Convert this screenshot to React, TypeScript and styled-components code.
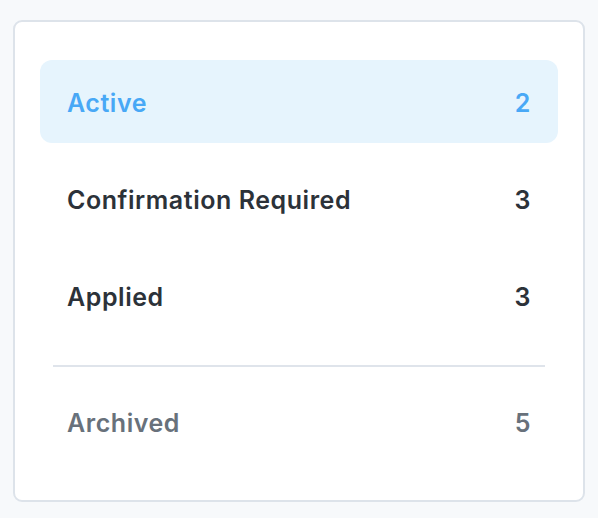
import React from 'react';
import styled, { createGlobalStyle } from 'styled-components';

const GlobalStyle = createGlobalStyle`
  html, body {
    margin: 0;
    padding: 0;
    background: #f7f9fb;
    font-family: Inter, "Noto Sans", sans-serif;
  }
`;

type Tone = 'active' | 'default' | 'muted';

interface Filter {
  label: string;
  count: number;
  tone: Tone;
}

const filters: Filter[] = [
  { label: 'Active', count: 2, tone: 'active' },
  { label: 'Confirmation Required', count: 3, tone: 'default' },
  { label: 'Applied', count: 3, tone: 'default' },
];

const archived: Filter = { label: 'Archived', count: 5, tone: 'muted' };

const toneColor = (tone: Tone) =>
  tone === 'active' ? '#48a8f6' : tone === 'muted' ? '#68717b' : '#2c3239';

const App: React.FC = () => {
  return (
    <Page>
      <GlobalStyle />
      <Card>
        <List>
          {filters.map((f) => (
            <Item key={f.label} $tone={f.tone}>
              <span>{f.label}</span>
              <span>{f.count}</span>
            </Item>
          ))}
        </List>
        <Divider />
        <Item $tone={archived.tone}>
          <span>{archived.label}</span>
          <span>{archived.count}</span>
        </Item>
      </Card>
    </Page>
  );
};

const Page = styled.div`
  width: 598px;
  height: 518px;
  padding: 20px 13px 0 13px;
  box-sizing: border-box;
`;

const Card = styled.div`
  background: #ffffff;
  border: 2px solid #dde3ea;
  border-radius: 9px;
  padding: 38px 25px 37px;
  height: 482px;
  box-sizing: border-box;
  display: flex;
  flex-direction: column;
`;

const List = styled.div`
  display: flex;
  flex-direction: column;
  gap: 14px;
`;

const Item = styled.div<{ $tone: Tone }>`
  display: flex;
  justify-content: space-between;
  align-items: center;
  height: 83px;
  padding: 2px 27px 0;
  box-sizing: border-box;
  border-radius: 12px;
  font-size: 25px;
  font-weight: 600;
  letter-spacing: 0.55px;
  color: ${({ $tone }) => toneColor($tone)};
  background: ${({ $tone }) => ($tone === 'active' ? '#e6f4fd' : 'transparent')};
`;

const Divider = styled.hr`
  border: none;
  height: 2px;
  background: #dfe4eb;
  margin: 28px 13px 13px;
`;

export default App;
